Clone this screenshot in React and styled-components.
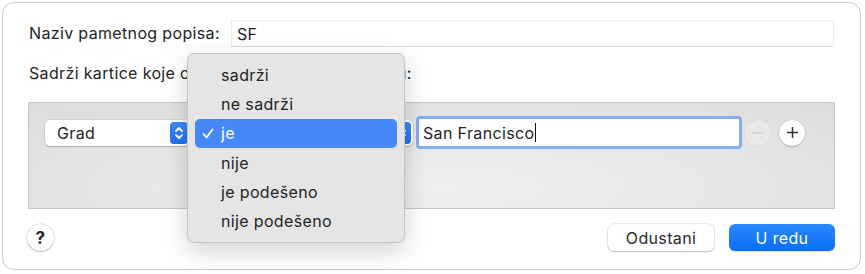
import React from 'react';
import styled, { createGlobalStyle } from 'styled-components';

const GlobalStyle = createGlobalStyle`
  body {
    margin: 0;
    background: #ffffff;
    font-family: Inter, "Noto Sans", sans-serif;
    color: #242424;
  }
`;

const Dialog = styled.div`
  position: relative;
  box-sizing: border-box;
  margin: 2px;
  width: 859px;
  height: 268px;
  border: 1px solid #c9c9c9;
  border-radius: 12px;
  background: #ffffff;
  padding: 17px 26px 0 26px;
  display: flex;
  flex-direction: column;
  font-size: 16px;
  letter-spacing: 0.35px;
`;

const Row = styled.div`
  display: flex;
  align-items: center;
  gap: ${(p) => p.gap || 0}px;
`;

const Label = styled.span`
  line-height: 19px;
  white-space: nowrap;
`;

const NameInput = styled.div`
  flex: 1;
  box-sizing: border-box;
  height: 27px;
  padding: 0 5px;
  display: flex;
  align-items: center;
  background: #ffffff;
  border: 1px solid #ececec;
  border-bottom-color: #dcdcdc;
`;

const ConditionLabel = styled(Label)`
  display: block;
  margin-top: 17px;
`;

const Panel = styled.div`
  margin: 19px -1px 0 -1px;
  box-sizing: border-box;
  height: 107px;
  border: 1px solid #c6c6c6;
  background: radial-gradient(ellipse at 50% 80%, #efefef 0%, #e6e6e6 55%, #dcdcdc 100%);
  padding: 13px 16px 0 16px;
`;

const Popup = styled.div`
  box-sizing: border-box;
  width: ${(p) => p.width}px;
  height: 26px;
  margin-left: ${(p) => p.gap || 0}px;
  background: #ffffff;
  border-radius: 5px;
  box-shadow: 0 0 0 0.5px rgba(0, 0, 0, 0.12), 0 1px 1.5px rgba(0, 0, 0, 0.2);
  display: flex;
  align-items: center;
  justify-content: space-between;
  padding: 0 2px 0 12px;
`;

const Stepper = styled.div`
  margin-left: auto;
  width: 18px;
  height: 22px;
  border-radius: 4px;
  background: linear-gradient(#3b8cf8, #1f6ff0);
  display: flex;
  align-items: center;
  justify-content: center;
`;

const TextField = styled.div`
  box-sizing: border-box;
  width: 326px;
  height: 33px;
  margin-left: 3px;
  border: 3px solid #86adf0;
  border-radius: 4px;
  background: #ffffff;
  display: flex;
  align-items: center;
  padding-left: 4px;
`;

const Caret = styled.span`
  display: inline-block;
  width: 1px;
  height: 19px;
  background: #111;
  margin-left: 1px;
`;

const RoundButton = styled.div`
  box-sizing: border-box;
  width: 26px;
  height: 26px;
  border-radius: 50%;
  display: flex;
  align-items: center;
  justify-content: center;
  background: ${(p) => (p.disabled ? '#e8e8e8' : '#ffffff')};
  box-shadow: ${(p) =>
    p.disabled
      ? '0 0 0 0.5px rgba(0,0,0,0.06)'
      : '0 0 0 0.5px rgba(0,0,0,0.12), 0 1px 1.5px rgba(0,0,0,0.2)'};
`;

const Footer = styled.div`
  margin-top: 15px;
  display: flex;
  align-items: center;
`;

const HelpButton = styled.div`
  width: 27px;
  height: 27px;
  margin-left: -2px;
  border-radius: 50%;
  background: #ffffff;
  box-shadow: 0 0 0 0.5px rgba(0, 0, 0, 0.15), 0 1px 2px rgba(0, 0, 0, 0.2);
  display: flex;
  align-items: center;
  justify-content: center;
  font-size: 17px;
  font-weight: 700;
  color: #2a2a2a;
`;

const Spacer = styled.div`
  flex: 1;
`;

const Button = styled.div`
  box-sizing: border-box;
  width: 106px;
  height: 27px;
  border-radius: 6px;
  display: flex;
  align-items: center;
  justify-content: center;
  margin-left: ${(p) => p.gap || 0}px;
  margin-right: -1px;
  color: ${(p) => (p.primary ? '#ffffff' : '#2a2a2a')};
  background: ${(p) => (p.primary ? 'linear-gradient(#2a88ff, #0b6ef5)' : '#ffffff')};
  box-shadow: ${(p) =>
    p.primary
      ? '0 1px 1px rgba(0,0,0,0.15)'
      : '0 0 0 0.5px rgba(0,0,0,0.15), 0 1px 1.5px rgba(0,0,0,0.2)'};
`;

const Menu = styled.div`
  position: absolute;
  left: 184px;
  top: 50px;
  width: 218px;
  box-sizing: border-box;
  padding: 6px 7px;
  background: #e5e5e5;
  border: 1px solid #c4c4c4;
  border-radius: 7px;
  box-shadow: 0 8px 24px rgba(0, 0, 0, 0.18);
`;

const MenuItem = styled.div`
  height: 29.3px;
  border-radius: 5px;
  display: flex;
  align-items: center;
  padding-left: 26px;
  position: relative;
  color: ${(p) => (p.active ? '#ffffff' : '#242424')};
  background: ${(p) => (p.active ? '#4588f7' : 'transparent')};
`;

const Check = styled.svg`
  position: absolute;
  left: 7px;
  top: 9px;
`;

const Chevrons = () => (
  <svg width="10" height="16" viewBox="0 0 10 16" fill="none" stroke="#fff" strokeWidth="1.8" strokeLinecap="round" strokeLinejoin="round">
    <path d="M2 6 L5 3 L8 6" />
    <path d="M2 10 L5 13 L8 10" />
  </svg>
);

const items = ['sadrži', 'ne sadrži', 'je', 'nije', 'je podešeno', 'nije podešeno'];

export default function App() {
  return (
    <>
      <GlobalStyle />
      <Dialog>
        <Row gap={11}>
          <Label>Naziv pametnog popisa:</Label>
          <NameInput>SF</NameInput>
        </Row>
        <ConditionLabel>Sadrži kartice koje odgovaraju sljedećem uvjetu:</ConditionLabel>
        <Panel>
          <Row>
            <Popup width={145}>
              Grad
              <Stepper>
                <Chevrons />
              </Stepper>
            </Popup>
            {/* operator popup, covered by the open menu */}
            <Popup width={216} gap={7}>
              <Stepper>
                <Chevrons />
              </Stepper>
            </Popup>
            <TextField>
              San Francisco
              <Caret />
            </TextField>
            <Row gap={8} style={{ marginLeft: 3 }}>
              <RoundButton disabled>
                <svg width="12" height="12" viewBox="0 0 12 12">
                  <path d="M1 6 H11" stroke="#d2d2d2" strokeWidth="1.4" />
                </svg>
              </RoundButton>
              <RoundButton>
                <svg width="13" height="13" viewBox="0 0 13 13">
                  <path d="M1 6.5 H12 M6.5 1 V12" stroke="#333" strokeWidth="1.5" />
                </svg>
              </RoundButton>
            </Row>
          </Row>
        </Panel>
        <Footer>
          <HelpButton>?</HelpButton>
          <Spacer />
          <Button>Odustani</Button>
          <Button primary gap={16}>
            U redu
          </Button>
        </Footer>
        <Menu>
          {items.map((item) => (
            <MenuItem key={item} active={item === 'je'}>
              {item === 'je' && (
                <Check width="12" height="11" viewBox="0 0 12 11" fill="none" stroke="#fff" strokeWidth="1.8" strokeLinecap="round" strokeLinejoin="round">
                  <path d="M1.5 6 L4.5 9.5 L10.5 1.5" />
                </Check>
              )}
              {item}
            </MenuItem>
          ))}
        </Menu>
      </Dialog>
    </>
  );
}
